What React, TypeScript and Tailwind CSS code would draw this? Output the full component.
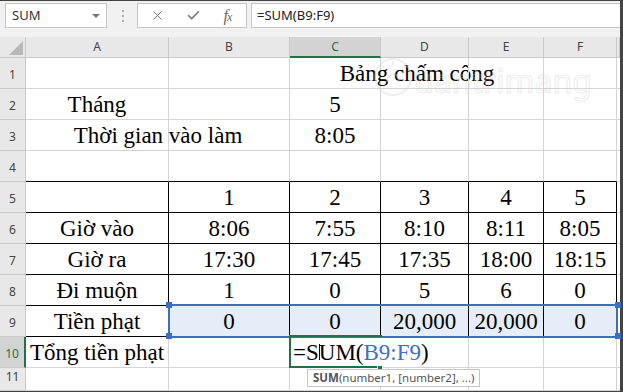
import { X, Check } from "lucide-react";
import type { ReactNode } from "react";

const COLS = "grid grid-cols-[26px_143px_121px_91px_88px_75px_73px_1fr]";
const SERIF = "font-['Liberation_Serif','DejaVu_Serif',serif]";
const UI = "font-['Noto_Sans','Open_Sans',sans-serif]";

// A..F values per sheet row (index 0 = row 1)
const rows: ReactNode[][] = [
    ["", "", "", "", "", ""],
    ["Tháng", "", "5", "", "", ""],
    ["", "", "8:05", "", "", ""],
    ["", "", "", "", "", ""],
    ["", "1", "2", "3", "4", "5"],
    ["Giờ vào", "8:06", "7:55", "8:10", "8:11", "8:05"],
    ["Giờ ra", "17:30", "17:45", "17:35", "18:00", "18:15"],
    ["Đi muộn", "1", "0", "5", "6", "0"],
    ["Tiền phạt", "0", "0", "20,000", "20,000", "0"],
    ["Tổng tiền phạt", "", "", "", "", ""],
    ["", "", "", "", "", ""],
];

function borderFor(r: number, c: number) {
    if (c === 6) return "border-b border-[#d4d4d4]";
    if (r >= 5 && r <= 9) return "border-r border-b border-black";
    if (r === 4) return "border-r border-b border-r-[#d4d4d4] border-b-black";
    if (r === 10 && c === 2) return "border-r border-b border-r-white border-b-[#d4d4d4]";
    return "border-r border-b border-[#d4d4d4]";
}

function isWide(r: number, c: number) {
    return (r === 1 && c === 2) || (r === 3 && c === 0) || (r === 10 && c === 2);
}

function cellContent(r: number, c: number): ReactNode {
    if (r === 1 && c === 2) {
        return <div className="w-[254px] shrink-0 flex justify-center whitespace-nowrap">Bảng chấm công</div>;
    }
    if (r === 3 && c === 0) {
        return <div className="w-[264px] shrink-0 flex justify-center whitespace-nowrap">Thời gian vào làm</div>;
    }
    if (r === 10 && c === 2) {
        return (
            <div className="shrink-0 pl-[3px] whitespace-nowrap">
                =S<span className="inline-block w-px h-[16px] bg-black align-baseline -mr-px" />UM(
                <span className="text-[#3c6fc4]">B9:F9</span>)
            </div>
        );
    }
    return rows[r - 1][c];
}

function SheetRow({ r }: { r: number }) {
    const active = r === 10;
    return (
        <div className={`${COLS} ${r === 11 ? "h-[23px]" : "h-[31px]"}`}>
            <div
                className={`${UI} text-[12px] flex items-end justify-center pb-[5px] leading-[16px] border-b border-[#c8c8c8] ${
                    active
                        ? "bg-[#d3d3d3] text-[#217346] border-r-2 border-r-[#217346]"
                        : "bg-[#e8e8e8] text-[#444] border-r border-r-[#c8c8c8]"
                }`}
            >
                {r}
            </div>
            {[0, 1, 2, 3, 4, 5, 6].map((c) => (
                <div
                    key={c}
                    className={`${SERIF} text-[23px] leading-[26px] text-black flex items-end pb-px overflow-visible ${
                        isWide(r, c) ? "justify-start" : "justify-center"
                    } ${borderFor(r, c)} ${r === 9 && c >= 1 && c <= 5 ? "bg-[#e6edf8]" : ""}`}
                >
                    {c < 6 ? cellContent(r, c) : null}
                </div>
            ))}
        </div>
    );
}

export default function App() {
    return (
        <div className="flex w-[623px] h-[392px] overflow-hidden bg-white">
            <div className="relative flex flex-col w-[620px] h-full">
                <div className="h-px bg-[#444]" />
                {/* formula bar */}
                <div className={`${UI} h-[36px] bg-[#f1f1f1] flex items-start pt-[2px]`}>
                    <div className="ml-[5px] w-[102px] h-[25px] bg-white border border-[#c6c6c6] flex items-center justify-between pl-[6px] pr-[6px]">
                        <span className="text-[13px] text-[#333]">SUM</span>
                        <span className="w-0 h-0 border-l-[4px] border-r-[4px] border-t-[4px] border-l-transparent border-r-transparent border-t-[#777]" />
                    </div>
                    <div className="ml-[14px] w-[3px] h-[25px] flex flex-col items-center justify-center gap-[3px]">
                        <span className="w-[2px] h-[2px] bg-[#b0b0b0]" />
                        <span className="w-[2px] h-[2px] bg-[#b0b0b0]" />
                        <span className="w-[2px] h-[2px] bg-[#b0b0b0]" />
                    </div>
                    <div className="ml-[13px] w-[110px] h-[25px] bg-white border border-[#c6c6c6] flex items-center">
                        <span className="w-[38px] flex justify-center text-[#7a7a7a]">
                            <X size={15} strokeWidth={1.6} />
                        </span>
                        <span className="w-[34px] flex justify-center text-[#7a7a7a]">
                            <Check size={15} strokeWidth={2.6} />
                        </span>
                        <span className="w-[36px] flex justify-center items-baseline text-[#666] font-['Liberation_Serif',serif] italic leading-none">
                            <span className="text-[16px]">f</span>
                            <span className="text-[12px] -ml-px">x</span>
                        </span>
                    </div>
                    <div className="ml-[4px] flex-1 h-[25px] bg-white border border-r-0 border-[#c6c6c6] flex items-center pl-[5px]">
                        <span className="text-[13px] text-[#222]">=SUM(B9:F9)</span>
                    </div>
                </div>

                {/* column headers */}
                <div className={`${COLS} h-[21px] ${UI} text-[12px] text-[#444]`}>
                    <div className="bg-[#e8e8e8] border-r border-b border-[#c8c8c8] flex items-end justify-end pr-[2px] pb-[2px]">
                        <svg width="14" height="14" viewBox="0 0 14 14">
                            <polygon points="14,0 14,14 0,14" fill="#b8b8b8" />
                        </svg>
                    </div>
                    {["A", "B", "C", "D", "E", "F", ""].map((l) => (
                        <div
                            key={l || "G"}
                            className={`flex items-center justify-center ${
                                l === "C"
                                    ? "bg-[#d3d3d3] text-[#217346] border-r border-r-[#c8c8c8] border-b-2 border-b-[#217346]"
                                    : "bg-[#e8e8e8] border-r border-b border-[#c8c8c8]"
                            }`}
                        >
                            {l}
                        </div>
                    ))}
                </div>

                {Array.from({ length: 11 }, (_, i) => (
                    <SheetRow key={i} r={i + 1} />
                ))}

                <div className="h-px bg-[#444] mt-auto" />

                {/* faint watermark */}
                <div className="absolute left-[372px] top-[52px] flex items-end opacity-40 pointer-events-none">
                    <svg width="42" height="46" viewBox="0 0 42 46" fill="none" stroke="#d6d6d6" strokeWidth="2">
                        <circle cx="21" cy="25" r="18" />
                        <path d="M21 13v-4M12 16l-3-3M30 16l3-3M15 30c0-5 3-8 6-8s6 3 6 8" />
                    </svg>
                    <span className={`${UI} text-[32px] leading-[34px] text-transparent [-webkit-text-stroke:1px_#d0d0d0]`}>
                        uantrimang
                    </span>
                </div>

                {/* range highlight B9:F9 */}
                <div className="absolute left-[168px] top-[304px] w-[450px] h-[34px] border-2 border-[#3b6fc4] pointer-events-none" />
                <span className="absolute left-[166px] top-[302px] w-[6px] h-[6px] bg-[#3b6fc4]" />
                <span className="absolute left-[615px] top-[302px] w-[6px] h-[6px] bg-[#3b6fc4]" />
                <span className="absolute left-[166px] top-[333px] w-[6px] h-[6px] bg-[#3b6fc4]" />
                <span className="absolute left-[615px] top-[333px] w-[6px] h-[6px] bg-[#3b6fc4]" />

                {/* active cell C10 */}
                <div className="absolute left-[289px] top-[335px] w-[93px] h-[33px] border-2 border-r-0 border-[#217346] pointer-events-none" />
                <span className="absolute left-[377px] top-[365px] w-[6px] h-[6px] bg-[#217346] border border-white" />

                {/* function tooltip */}
                <div className={`${UI} absolute left-[307px] top-[369px] h-[18px] px-[5px] bg-white border border-[#c6c6c6] text-[11.5px] leading-[16px] text-[#555] whitespace-nowrap`}>
                    <span className="font-bold">SUM</span>(number1, [number2], ...)
                </div>
            </div>
            <div className="w-[3px] h-full bg-[#444]" />
        </div>
    );
}
